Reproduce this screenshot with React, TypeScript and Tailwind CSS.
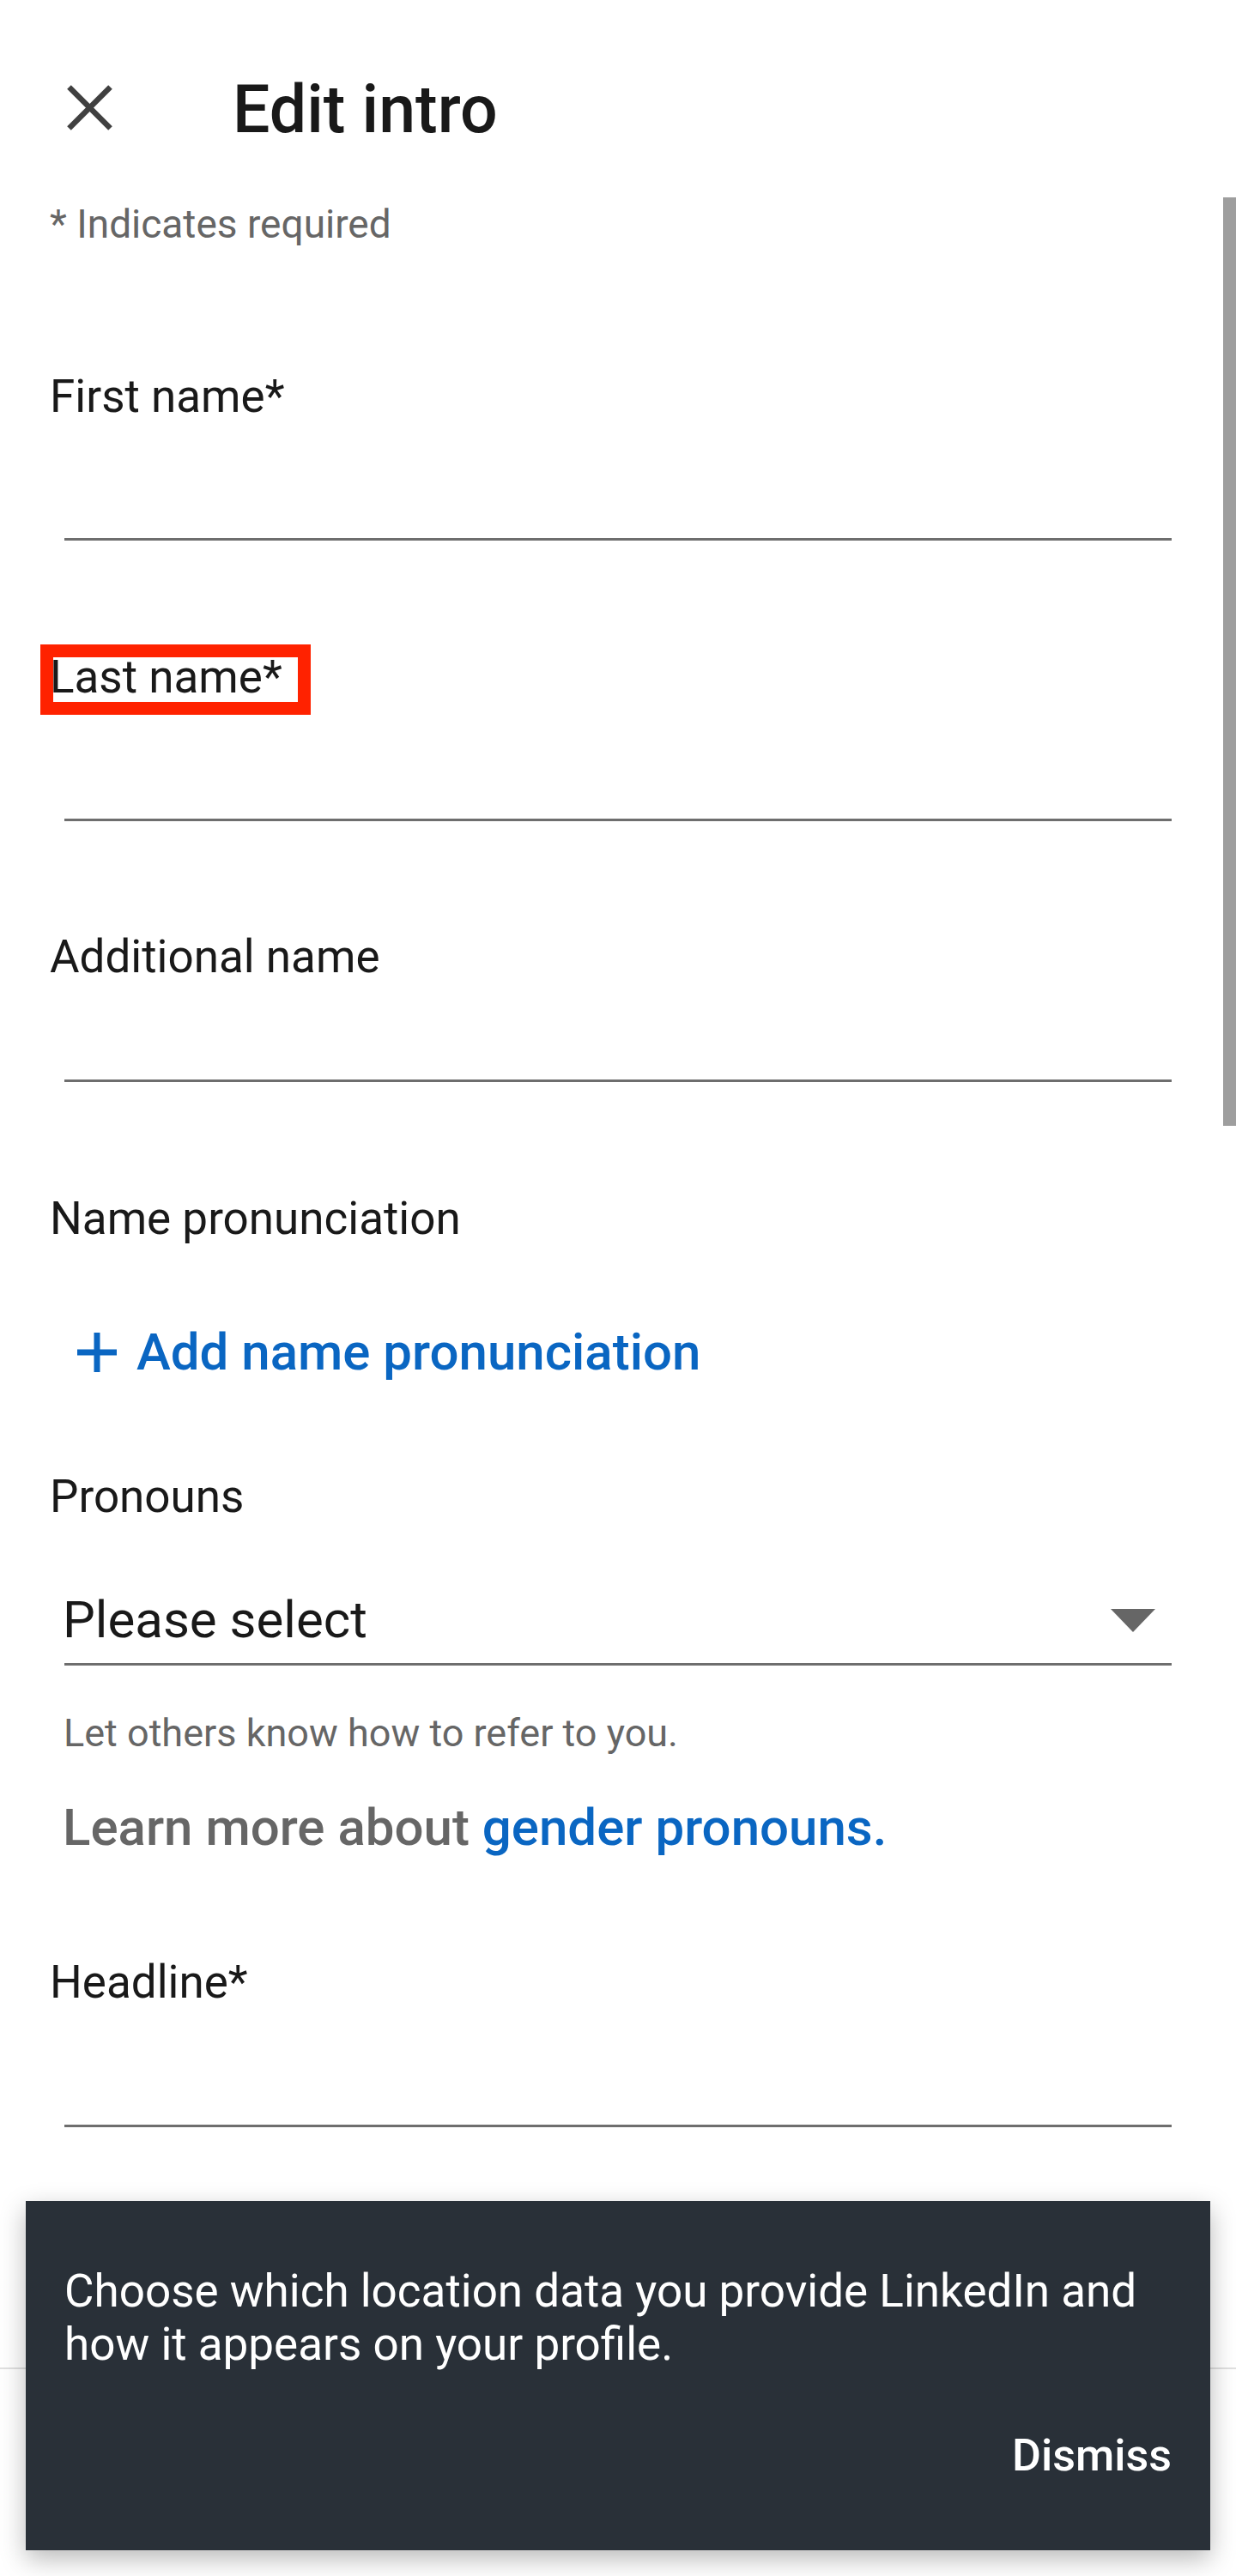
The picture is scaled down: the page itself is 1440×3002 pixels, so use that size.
import React from "react";

function CloseIcon() {
  return (
    <svg width="53" height="53" viewBox="0 0 53 53" className="shrink-0">
      <line x1="2.5" y1="2.5" x2="50.5" y2="50.5" stroke="#404040" strokeWidth="6.5" />
      <line x1="50.5" y1="2.5" x2="2.5" y2="50.5" stroke="#404040" strokeWidth="6.5" />
    </svg>
  );
}

function PlusIcon() {
  return (
    <svg width="46" height="46" viewBox="0 0 46 46" className="shrink-0">
      <line x1="23" y1="0" x2="23" y2="46" stroke="#0a66c2" strokeWidth="7" />
      <line x1="0" y1="23" x2="46" y2="23" stroke="#0a66c2" strokeWidth="7" />
    </svg>
  );
}

function Caret() {
  return (
    <svg width="52" height="27" viewBox="0 0 52 27" className="shrink-0">
      <polygon points="0,0 52,0 26,27" fill="#666666" />
    </svg>
  );
}

function Underline({ className }: { className: string }) {
  return <div className={"mx-[75px] h-[3px] bg-[#6e6e6e] " + className} />;
}

export default function App() {
  return (
    <div className="relative w-[1440px] h-[3002px] overflow-hidden bg-white font-['Roboto',sans-serif] text-[#191919]">
      {/* header */}
      <div className="flex items-start pt-[84px] pl-[78px]">
        <div className="mt-[15px]">
          <CloseIcon />
        </div>
        <h1 className="ml-[140px] text-[77px] leading-[88px] font-medium text-[#191919]">Edit intro</h1>
      </div>

      <p className="mt-[63px] pl-[58px] text-[46px] leading-[52px] text-[#666666]">* Indicates required</p>

      <p className="mt-[145px] pl-[58px] text-[53px] leading-[60px]">First name*</p>
      <Underline className="mt-[135px]" />

      <div className="mt-[129px] pl-[58px]">
        <div className="relative inline-block">
          <span className="text-[53px] leading-[60px]">Last name*</span>
          <div className="absolute left-[-11px] top-[-8px] w-[315px] h-[82px] border-[15px] border-[#ff2200]" />
        </div>
      </div>
      <Underline className="mt-[135px]" />

      <p className="mt-[128px] pl-[58px] text-[53px] leading-[60px]">Additional name</p>
      <Underline className="mt-[113px]" />

      <p className="mt-[129px] pl-[58px] text-[53px] leading-[60px]">Name pronunciation</p>
      <div className="mt-[92px] flex items-center pl-[90px]">
        <PlusIcon />
        <span className="ml-[23px] text-[60px] leading-[68px] font-medium text-[#0a66c2]">Add name pronunciation</span>
      </div>

      <p className="mt-[104px] pl-[58px] text-[53px] leading-[60px]">Pronouns</p>
      <div className="mt-[80px] mx-[75px] flex items-center justify-between">
        <span className="-ml-[2px] text-[60px] leading-[68px]">Please select</span>
        <div className="mr-[19px]">
          <Caret />
        </div>
      </div>
      <Underline className="mt-[16px]" />
      <p className="mt-[53px] pl-[74px] text-[45px] leading-[52px] text-[#666666]">Let others know how to refer to you.</p>
      <p className="mt-[50px] pl-[73px] text-[60px] leading-[68px] font-medium text-[#666666]">
        Learn more about <span className="text-[#0a66c2]">gender pronouns.</span>
      </p>

      <p className="mt-[116px] pl-[58px] text-[53px] leading-[60px]">Headline*</p>
      <Underline className="mt-[136px]" />

      {/* bottom bar */}
      <div className="mt-[280px] h-[243px] border-t-2 border-[#e0e0e0] bg-white" />

      {/* scrollbar */}
      <div className="absolute right-0 top-[230px] w-[15px] h-[1082px] bg-[#9e9e9e]" />

      {/* snackbar */}
      <div className="absolute left-[30px] top-[2565px] w-[1380px] h-[407px] bg-[#293038] pt-[74px] pl-[45px] pr-[45px] shadow-[0_10px_28px_rgba(0,0,0,0.28)]">
        <p className="text-[53px] leading-[62px] text-white">
          Choose which location data you provide LinkedIn and
          <br />
          how it appears on your profile.
        </p>
        <div className="mt-[69px] flex justify-end">
          <span className="text-[52px] leading-[60px] font-medium text-white">Dismiss</span>
        </div>
      </div>
    </div>
  );
}
